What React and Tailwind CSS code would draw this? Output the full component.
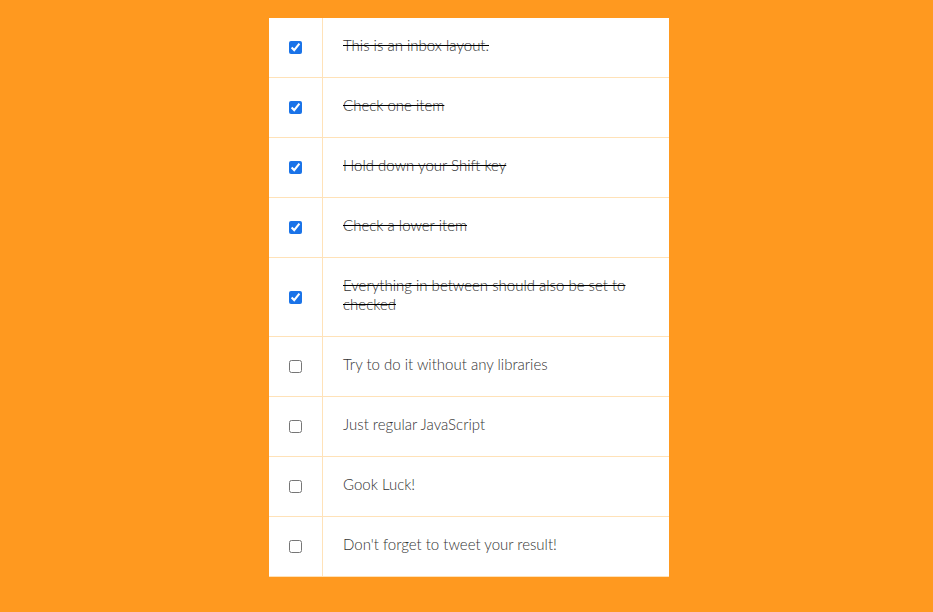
import React, { useRef, useState } from 'react'

const initialItems = [
  { text: 'This is an inbox layout.', done: true },
  { text: 'Check one item', done: true },
  { text: 'Hold down your Shift key', done: true },
  { text: 'Check a lower item', done: true },
  { text: 'Everything in between should also be set to checked', done: true },
  { text: 'Try to do it without any libraries', done: false },
  { text: 'Just regular JavaScript', done: false },
  { text: 'Gook Luck!', done: false },
  { text: "Don't forget to tweet your result!", done: false },
]

function App() {
  const [items, setItems] = useState(initialItems)
  const lastChecked = useRef(null)

  const handleClick = (index, event) => {
    const checked = event.target.checked
    setItems((prev) => {
      const next = prev.map((item) => ({ ...item }))
      next[index].done = checked
      if (event.shiftKey && checked && lastChecked.current !== null) {
        const start = Math.min(index, lastChecked.current)
        const end = Math.max(index, lastChecked.current)
        for (let i = start; i <= end; i++) next[i].done = true
      }
      return next
    })
    lastChecked.current = index
  }

  return (
    <main className="min-h-screen bg-[#ff991f] pt-[18px] pl-[5px] font-['Lato','Liberation_Sans',sans-serif]">
      <div className="mx-auto w-[400px] bg-white">
        {items.map((item, index) => (
          <div key={item.text} className="flex items-center border-b border-[#ffe2b8]">
            <input
              type="checkbox"
              checked={item.done}
              onChange={() => {}}
              onClick={(event) => handleClick(index, event)}
              className="m-5 h-[13px] w-[13px] accent-[#1a73e8]"
            />
            <p
              className={`flex-1 self-stretch border-l border-[#ffe2b8] px-5 pt-[18px] pb-[22px] text-[15px] leading-[19px] font-light text-[#333] ${
                item.done ? 'line-through decoration-black' : ''
              }`}
            >
              {item.text}
            </p>
          </div>
        ))}
      </div>
    </main>
  )
}

export default App
